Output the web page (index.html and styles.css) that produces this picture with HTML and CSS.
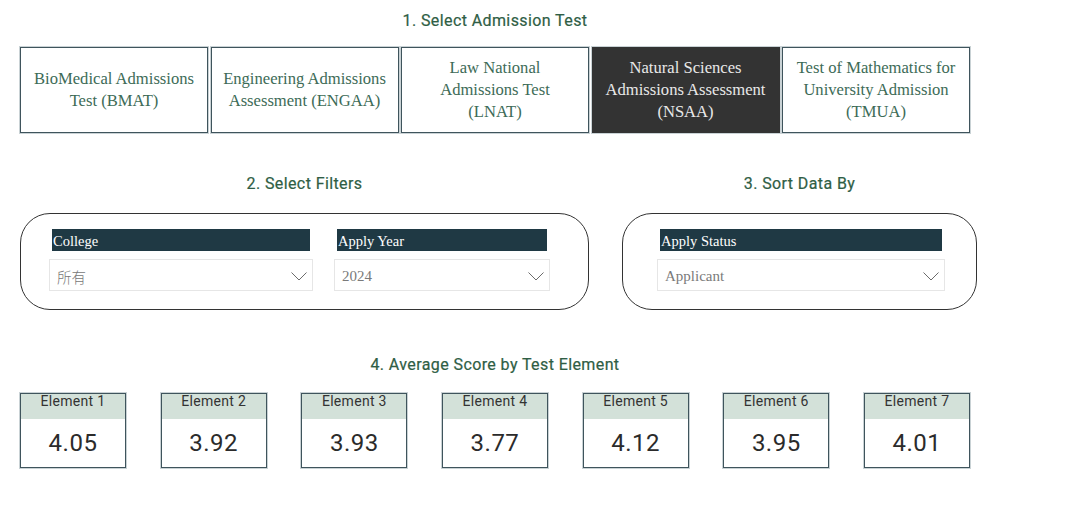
FILE: index.html
```html
<!DOCTYPE html>
<html>
<head>
<meta charset="utf-8">
<link rel="stylesheet" href="styles.css">
</head>
<body>
<div class="page">
  <section class="sec1">
    <h2 class="title t1">1. Select Admission Test</h2>
    <div class="tests">
      <div class="test">BioMedical Admissions Test (BMAT)</div>
      <div class="test">Engineering Admissions Assessment (ENGAA)</div>
      <div class="test narrow">Law National Admissions Test (LNAT)</div>
      <div class="test active">Natural Sciences Admissions Assessment (NSAA)</div>
      <div class="test">Test of Mathematics for University Admission (TMUA)</div>
    </div>
  </section>

  <section class="sec2">
    <div class="group filters">
      <h2 class="title">2. Select Filters</h2>
      <div class="panel">
        <div class="slicer college">
          <div class="shead">College</div>
          <div class="sbox"><span class="cjk">所有</span><svg class="chev" viewBox="0 0 16 9"><polyline points="0.5,0.5 8,8 15.5,0.5"/></svg></div>
        </div>
        <div class="slicer year">
          <div class="shead">Apply Year</div>
          <div class="sbox"><span>2024</span><svg class="chev" viewBox="0 0 16 9"><polyline points="0.5,0.5 8,8 15.5,0.5"/></svg></div>
        </div>
      </div>
    </div>
    <div class="group sort">
      <h2 class="title">3. Sort Data By</h2>
      <div class="panel">
        <div class="slicer status">
          <div class="shead">Apply Status</div>
          <div class="sbox"><span>Applicant</span><svg class="chev" viewBox="0 0 16 9"><polyline points="0.5,0.5 8,8 15.5,0.5"/></svg></div>
        </div>
      </div>
    </div>
  </section>

  <section class="sec4">
    <h2 class="title t4">4. Average Score by Test Element</h2>
    <div class="cards">
      <div class="card"><div class="chead">Element 1</div><div class="cval">4.05</div></div>
      <div class="card"><div class="chead">Element 2</div><div class="cval">3.92</div></div>
      <div class="card"><div class="chead">Element 3</div><div class="cval">3.93</div></div>
      <div class="card"><div class="chead">Element 4</div><div class="cval">3.77</div></div>
      <div class="card"><div class="chead">Element 5</div><div class="cval">4.12</div></div>
      <div class="card"><div class="chead">Element 6</div><div class="cval">3.95</div></div>
      <div class="card"><div class="chead">Element 7</div><div class="cval">4.01</div></div>
    </div>
  </section>
</div>
</body>
</html>
```

FILE: styles.css
```css
* { box-sizing: border-box; }
html, body { margin: 0; padding: 0; background: #ffffff; }
.page { width: 1080px; height: 523px; overflow: hidden; }

.title {
  margin: 0;
  font-family: Roboto, "Liberation Sans", sans-serif;
  font-weight: 400;
  font-size: 16px;
  letter-spacing: 0.4px;
  line-height: 20px;
  color: #2f5e45;
  text-align: center;
  -webkit-text-stroke: 0.2px #2f5e45;
}

.sec1 { width: 950px; margin-left: 20px; padding-top: 11px; }
.tests { display: flex; gap: 2.5px; margin-top: 16px; }
.test {
  width: 188px;
  height: 86px;
  border: 1px solid #3f545c;
  box-shadow: 0 0 0 1px #c9d2d5;
  display: flex;
  align-items: center;
  justify-content: center;
  text-align: center;
  padding: 0 8px;
  font-family: "Liberation Serif", serif;
  font-size: 16.6px;
  line-height: 22px;
  color: #3d6b57;
}
.test.narrow { padding: 0 36px; }
.test.active { background: #333333; color: #e8e8e8; border-color: #333333; }

.sec2 { display: flex; margin-top: 41px; margin-left: 20px; gap: 33px; }
.group { display: flex; flex-direction: column; }
.filters { width: 569px; }
.sort { width: 355px; }
.panel {
  margin-top: 19px;
  height: 97px;
  border: 1px solid #333;
  border-radius: 30px;
  display: flex;
  padding-top: 15px;
}
.filters .panel { padding-left: 28px; gap: 21px; }
.sort .panel { padding-left: 34px; }
.slicer { display: flex; flex-direction: column; }
.college { width: 264px; }
.year { width: 216px; }
.status { width: 288px; }
.shead {
  margin: 0 3px;
  height: 22px;
  background: #1f3944;
  color: #ffffff;
  font-family: "Liberation Serif", serif;
  font-size: 14.5px;
  line-height: 24px;
  padding-left: 1px;
}
.sbox {
  margin-top: 8px;
  height: 32px;
  border: 1px solid #e6e6e6;
  display: flex;
  align-items: center;
  justify-content: space-between;
  padding: 2px 5px 0 7px;
  font-family: "Liberation Serif", serif;
  font-size: 15px;
  color: #7a7a7a;
}
.cjk { font-family: "Noto Sans CJK SC", sans-serif; font-size: 14.5px; font-weight: 300; color: #777; }
.chev { width: 16px; height: 9px; fill: none; stroke: #6b6b6b; stroke-width: 1; }

.sec4 { width: 950px; margin-left: 20px; margin-top: 45px; }
.cards { display: flex; justify-content: space-between; margin-top: 18px; }
.card {
  width: 106px;
  height: 75px;
  border: 1px solid #3f545c;
  box-shadow: 0 0 0 1px #c9d2d5;
  display: flex;
  flex-direction: column;
}
.chead {
  height: 25px;
  background: #d3e1d9;
  text-align: center;
  font-family: Roboto, "Liberation Sans", sans-serif;
  font-size: 14px;
  letter-spacing: 0.3px;
  line-height: 15px;
  color: #333;
}
.cval {
  flex: 1;
  display: flex;
  align-items: center;
  justify-content: center;
  font-family: Roboto, "Liberation Sans", sans-serif;
  font-size: 24px;
  letter-spacing: 0.5px;
  color: #2b2b2b;
  padding-bottom: 1px;
}
```
